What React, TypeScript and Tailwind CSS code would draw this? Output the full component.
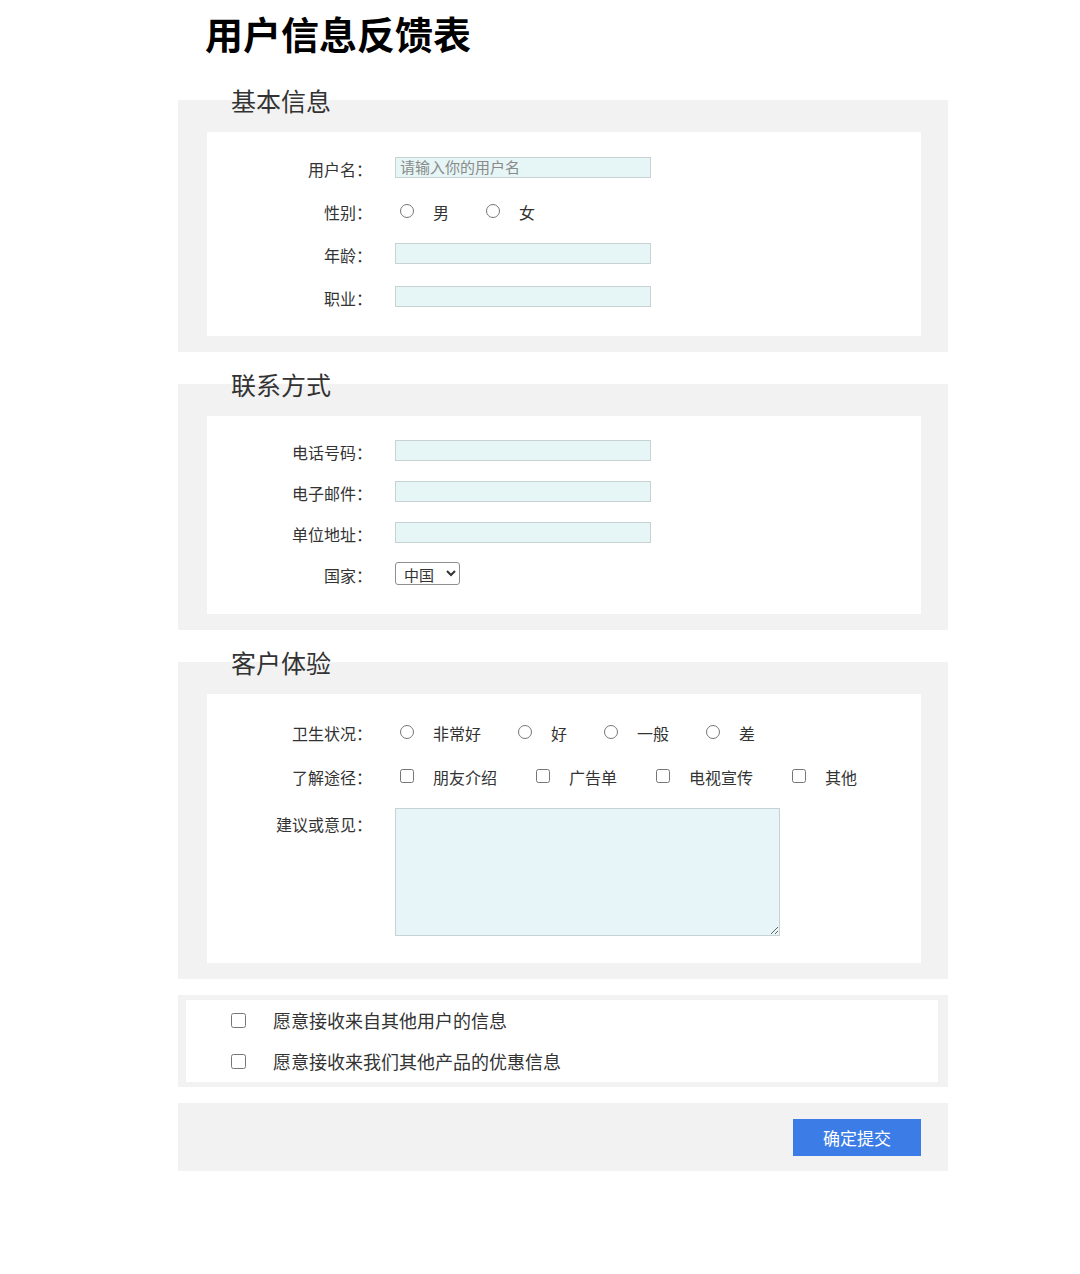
import React from 'react';

const inputCls =
  'w-[256px] h-[21px] bg-[#e6f6f6] border border-[#c9d2d2] px-1 text-[15px] text-[#333] placeholder:text-[#8a8a8a] outline-none';

const Label: React.FC<{ children: React.ReactNode }> = ({ children }) => (
  <span className="w-[165px] shrink-0 text-right text-[16px] text-[#333] pt-[2px]">{children}</span>
);

const Row: React.FC<{ label: string; h: string; children: React.ReactNode }> = ({ label, h, children }) => (
  <div className={`flex items-center ${h}`}>
    <Label>{label}</Label>
    <div className="ml-[23px] flex items-center">{children}</div>
  </div>
);

const Option: React.FC<{ type: 'radio' | 'checkbox'; name: string; text: string }> = ({ type, name, text }) => (
  <label className={`flex items-center text-[16px] text-[#333] ${type === 'radio' ? 'mr-[32px]' : 'mr-[34px]'}`}>
    <input type={type} name={name} className="w-[14px] h-[14px] m-0 ml-[5px] mr-[19px] accent-[#3c7ce6]" />
    <span className="pt-[2px]">{text}</span>
  </label>
);

const Section: React.FC<{ title: string; children: React.ReactNode }> = ({ title, children }) => (
  <fieldset className="bg-[#f2f2f2] pl-[29px] pr-[27px] pt-[16px] pb-[16px] mb-[16px]">
    <legend className="ml-[24px] text-[25px] leading-[32px] text-[#333]">{title}</legend>
    <div className="bg-white">{children}</div>
  </fieldset>
);

const App: React.FC = () => {
  return (
    <div className="w-[1080px] min-h-[1274px] bg-white font-['Noto_Sans_CJK_SC',sans-serif]">
      <div className="ml-[178px] w-[770px]">
        <h1 className="pl-[27px] pt-[10px] text-[38px] leading-[46px] font-bold text-black mb-[28px]">用户信息反馈表</h1>

        <Section title="基本信息">
          <div className="pt-[14px] pb-[18px]">
            <Row label="用户名：" h="h-[43px]">
              <input className={inputCls} placeholder="请输入你的用户名" />
            </Row>
            <Row label="性别：" h="h-[43px]">
              <Option type="radio" name="sex" text="男" />
              <Option type="radio" name="sex" text="女" />
            </Row>
            <Row label="年龄：" h="h-[43px]">
              <input className={inputCls} />
            </Row>
            <Row label="职业：" h="h-[43px]">
              <input className={inputCls} />
            </Row>
          </div>
        </Section>

        <Section title="联系方式">
          <div className="pt-[14px] pb-[20px]">
            <Row label="电话号码：" h="h-[41px]">
              <input className={inputCls} />
            </Row>
            <Row label="电子邮件：" h="h-[41px]">
              <input className={inputCls} />
            </Row>
            <Row label="单位地址：" h="h-[41px]">
              <input className={inputCls} />
            </Row>
            <Row label="国家：" h="h-[41px]">
              <select className="h-[23px] w-[65px] border border-[#8f8f8f] rounded-[3px] bg-white text-[15px] text-[#333] pl-1">
                <option>中国</option>
              </select>
            </Row>
          </div>
        </Section>

        <Section title="客户体验">
          <div className="pt-[16px] pb-[27px]">
            <Row label="卫生状况：" h="h-[43px]">
              <Option type="radio" name="clean" text="非常好" />
              <Option type="radio" name="clean" text="好" />
              <Option type="radio" name="clean" text="一般" />
              <Option type="radio" name="clean" text="差" />
            </Row>
            <Row label="了解途径：" h="h-[46px]">
              <Option type="checkbox" name="way" text="朋友介绍" />
              <Option type="checkbox" name="way" text="广告单" />
              <Option type="checkbox" name="way" text="电视宣传" />
              <Option type="checkbox" name="way" text="其他" />
            </Row>
            <div className="flex items-start mt-[9px]">
              <span className="w-[165px] shrink-0 text-right text-[16px] leading-[24px] text-[#333] mt-[4px]">建议或意见：</span>
              <textarea className="ml-[23px] w-[385px] h-[128px] bg-[#e7f5f8] border border-[#c9d2d2] outline-none" />
            </div>
          </div>
        </Section>

        <div className="bg-[#f2f2f2] pl-[8px] pr-[10px] pt-[5px] pb-[5px] mb-[16px]">
          <div className="bg-white pl-[45px]">
            <label className="flex items-center h-[41px] text-[18px] text-[#333]">
              <input type="checkbox" className="w-[15px] h-[15px] m-0 mr-[27px]" />
              <span>愿意接收来自其他用户的信息</span>
            </label>
            <label className="flex items-center h-[41px] text-[18px] text-[#333]">
              <input type="checkbox" className="w-[15px] h-[15px] m-0 mr-[27px]" />
              <span>愿意接收来我们其他产品的优惠信息</span>
            </label>
          </div>
        </div>

        <div className="bg-[#f2f2f2] flex justify-end pr-[27px] pt-[16px] pb-[15px]">
          <button className="w-[128px] h-[37px] bg-[#3c7ce6] text-white text-[17px]">确定提交</button>
        </div>
      </div>
    </div>
  );
};

export default App;
